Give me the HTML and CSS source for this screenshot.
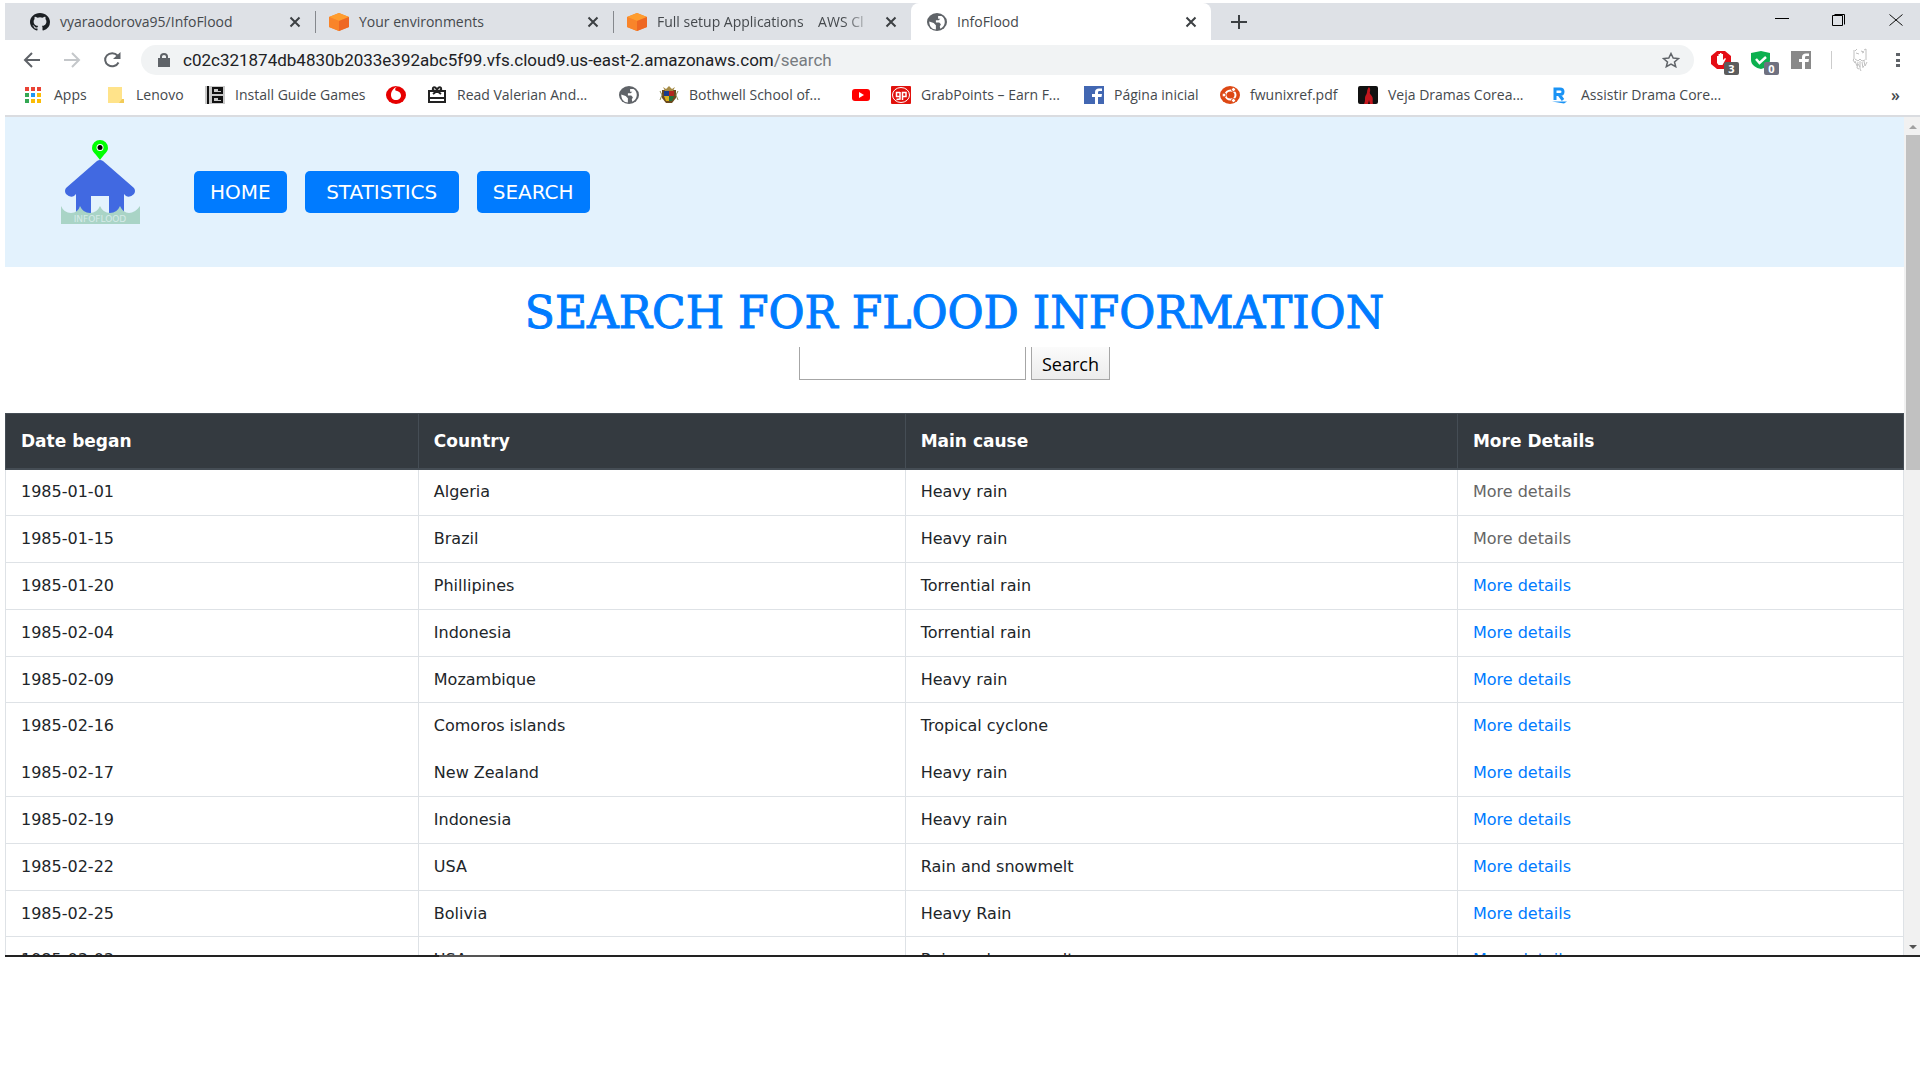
FILE: index.html
```html
<!DOCTYPE html>
<html lang="en">
<head>
<meta charset="utf-8">
<title>InfoFlood</title>
<link rel="stylesheet" href="styles.css">
</head>
<body>
<svg class="defs" aria-hidden="true">
  <symbol id="close" viewBox="0 0 12 12"><path d="M1.500 1.500l9 9M10.500 1.500l-9 9" stroke="#3c4043" stroke-width="2" fill="none"/></symbol>
  <symbol id="cube" viewBox="0 0 20 18"><path d="M10 0l10 4v10l-10 4-10-4V4z" fill="#f58536"/><path d="M10 0l10 4-10 4L0 4z" fill="#ff9d2e"/><path d="M0 4l10 4v10L0 14z" fill="#f9842a"/><path d="M10 8l10-4v10l-10 4z" fill="#ee6723"/></symbol>
  <symbol id="globe" viewBox="0 0 18 16"><ellipse cx="9" cy="8" rx="9" ry="8" fill="#5f6368"/><path d="M2 7.500L6 9l2 2v3.800C4.500 14.500 2 12 2 7.500zM10 2.500h3c2 1 3 3 3 5.500s-1.500 5-4 6l-.5-2 1-2-1.500-1.500H8v-2h2.500L12 5h-2z" fill="#fff"/></symbol>
</svg>
<div class="window">
  <header class="chrome">
    <div class="tabstrip">
      <div class="tab">
        <svg class="ico" viewBox="0 0 20 18" preserveAspectRatio="none"><path transform="scale(1.25 1.125)" fill="#1b1f23" d="M8 0C3.580 0 0 3.580 0 8c0 3.540 2.290 6.530 5.470 7.590.4.070.55-.17.55-.38 0-.19-.01-.82-.01-1.490-2.010.37-2.530-.49-2.690-.94-.09-.23-.48-.94-.82-1.130-.28-.15-.68-.52-.01-.53.63-.01 1.080.58 1.230.82.72 1.210 1.870.87 2.330.66.070-.52.28-.87.51-1.070-1.780-.2-3.640-.89-3.640-3.950 0-.87.31-1.590.82-2.150-.08-.2-.36-1.020.08-2.120 0 0 .67-.21 2.200.82a7.600 7.600 0 0 1 4 0c1.530-1.040 2.200-.82 2.200-.82.44 1.100.16 1.920.08 2.120.51.56.82 1.270.82 2.150 0 3.070-1.870 3.750-3.650 3.950.29.25.54.73.54 1.480 0 1.070-.01 1.930-.01 2.200 0 .21.15.46.55.38A8.010 8.010 0 0 0 16 8c0-4.420-3.580-8-8-8z"/></svg>
        <span class="tab-title">vyaraodorova95/InfoFlood</span>
        <button class="bare" aria-label="Close tab"><svg class="x"><use href="#close"/></svg></button>
      </div>
      <div class="tab divided">
        <svg class="ico"><use href="#cube"/></svg>
        <span class="tab-title">Your environments</span>
        <button class="bare" aria-label="Close tab"><svg class="x"><use href="#close"/></svg></button>
      </div>
      <div class="tab divided">
        <svg class="ico"><use href="#cube"/></svg>
        <span class="tab-title fade">Full setup Applications &nbsp; &nbsp;AWS Cl</span>
        <button class="bare" aria-label="Close tab"><svg class="x"><use href="#close"/></svg></button>
      </div>
      <div class="tab active">
        <svg class="ico"><use href="#globe"/></svg>
        <span class="tab-title">InfoFlood</span>
        <button class="bare" aria-label="Close tab"><svg class="x"><use href="#close"/></svg></button>
      </div>
      <button class="bare newtab" aria-label="New tab"><svg width="16" height="16" viewBox="0 0 16 16"><path d="M8 1v14M0 8h16" stroke="#3c4043" stroke-width="2"/></svg></button>
      <div class="controls">
        <button class="bare" aria-label="Minimize"><svg width="14" height="12" viewBox="0 0 14 12"><path d="M0 4.500h14" stroke="#000"/></svg></button>
        <button class="bare" aria-label="Restore"><svg width="14" height="12" viewBox="0 0 14 12"><path d="M.5 1.500h10v10H.5zM2.500.5h10v10" fill="none" stroke="#000"/></svg></button>
        <button class="bare" aria-label="Close"><svg width="14" height="12" viewBox="0 0 14 12"><path d="M.5.5l13 11M13.500.5l-13 11" stroke="#111"/></svg></button>
      </div>
    </div>

    <div class="toolbar">
      <button class="bare" aria-label="Back"><svg width="18" height="16" viewBox="0 0 18 16"><path d="M17 8H2M9 1L2 8l7 7" fill="none" stroke="#5f6368" stroke-width="2"/></svg></button>
      <button class="bare" aria-label="Forward"><svg width="18" height="16" viewBox="0 0 18 16"><path d="M1 8h15M9 1l7 7-7 7" fill="none" stroke="#c4c7ca" stroke-width="2"/></svg></button>
      <button class="bare" aria-label="Reload"><svg width="18" height="16" viewBox="0 0 18 16"><path d="M15.500 10.500A7 6.500 0 1 1 14.500 3.500" fill="none" stroke="#5f6368" stroke-width="2"/><path d="M17.500 0v7H10z" fill="#5f6368"/></svg></button>
      <div class="omnibox">
        <svg width="12" height="14" viewBox="0 0 12 14"><path d="M0 5h12v9H0z" fill="#5f6368"/><path d="M3 5V3.500a3 2.500 0 0 1 6 0V5" fill="none" stroke="#5f6368" stroke-width="2"/></svg>
        <span class="url">c02c321874db4830b2033e392abc5f99.vfs.cloud9.us-east-2.amazonaws.com<span class="path">/search</span></span>
        <svg width="18" height="16" viewBox="0 0 18 16"><path d="M9 1.500l2.200 4.500 5.300.5-4 3.400 1.200 4.800L9 12.100l-4.700 2.600 1.200-4.800-4-3.400L6.800 6z" fill="none" stroke="#5f6368" stroke-width="1.500"/></svg>
      </div>
      <div class="extensions">
        <span class="ext"><svg width="20" height="18" viewBox="0 0 20 18"><path d="M6 0h8l6 5v8l-6 5H6l-6-5V5z" fill="#e40d15"/><path d="M6 12V5h1.500v4V3H9v5-6h1.500v6V3H12v6l2-2 1 .7-3.500 6.300h-4z" fill="#fff"/></svg><span class="badge">3</span></span>
        <span class="ext"><svg width="20" height="18" viewBox="0 0 20 18"><path d="M0 2l10-2 9 2v7c0 5-5 8-9 9-5-1-10-4-10-9z" fill="#0cb04f"/><path d="M5 8l3.500 4L15 6" fill="none" stroke="#fff" stroke-width="2.500"/></svg><span class="badge slate">0</span></span>
        <svg width="20" height="18" viewBox="0 0 20 18"><path d="M0 0h20v18H0z" fill="#898989"/><path d="M11 18v-7H8V8h3V6c0-2 1.500-3.500 4-3.500h3V5h-2.500C14.500 5 14 5.500 14 6.500V8h4l-.5 3H14v7z" fill="#fff"/></svg>
        <span class="rule"></span>
        <svg width="16" height="24" viewBox="0 0 16 24"><path d="M2 2v9l-1 1 2 3M5 1l-2 2M14 1v11M12 2l2-1M4 5l3 1M9 3l3 1-2 1M3 11l3 2 2-2 2 2 3-1M3 13l2 5M6 14l-1 6 2 1M8 13v8l1 2M10 14l1 6M12 13l1 5 2-4M6 16l2 3M10 17l2 2" fill="none" stroke="#c0c0c0"/></svg>
        <svg width="4" height="16" viewBox="0 0 4 16"><path d="M0 1h4v3H0zM0 7h4v3H0zM0 12h4v3H0z" fill="#5f6368"/></svg>
      </div>
    </div>

    <nav class="bookmarks" aria-label="Bookmarks">
      <a href="#"><svg class="bi" viewBox="0 0 20 18"><path d="M1 1h4v4H1zM7 1h4v4H7zM13 1h4v4h-4z" fill="#ea4335"/><path d="M1 7h4v4H1zM1 13h4v4H1z" fill="#34a853"/><path d="M7 7h4v4H7z" fill="#2196f3"/><path d="M7 13h4v4H7zM13 7h4v4h-4zM13 13h4v4h-4z" fill="#fbbc05"/></svg>Apps</a>
      <a href="#"><svg class="bi" viewBox="0 0 20 18"><path d="M2 1h14v12h2v4H2z" fill="#ffe38a"/><path d="M16 13h2v4h-5z" fill="#f2cb58"/></svg>Lenovo</a>
      <a href="#"><svg class="bi" viewBox="0 0 20 18"><path d="M0 0h20v18H0z" fill="#c9c9c9"/><path d="M3 0v18M18 2H8v5h9V4h-4M18 11H8v5h9v-3h-4" fill="none" stroke="#111" stroke-width="2"/></svg>Install Guide Games</a>
      <a href="#" aria-label="Vodafone"><svg class="bi" viewBox="0 0 20 18"><ellipse cx="10" cy="9" rx="10" ry="9" fill="#e60000"/><path d="M13 0C9 1 9 3 9.500 4.500 13 5 15 7 15 9.500S13 14 10 14s-5-2-5-5C5 5 8 1 13 0z" fill="#fff"/></svg></a>
      <a href="#"><svg class="bi" viewBox="0 0 20 18"><path d="M2 5h16v11H2zM2 12h16M6 8l4-3 4 3M10 5C7 5 5 4 6 2s4 0 4 3c0-3 3-5 4-3s-1 3-4 3" fill="none" stroke="#222" stroke-width="2"/></svg>Read Valerian And...</a>
      <a href="#" aria-label="Website"><svg class="bi"><use href="#globe"/></svg></a>
      <a href="#"><svg class="bi" viewBox="0 0 20 18"><path d="M3 4h14v8l-4 5H7l-4-5z" fill="#6b4a1d"/><path d="M5 5h5v5H5z" fill="#173c8c"/><path d="M10 5h5v5h-5z" fill="#b3261e"/><path d="M5 10h5v5H7z" fill="#d9b01c"/><path d="M10 10h5l-2 5h-3z" fill="#23703a"/><path d="M4 1l3 2 3-3 3 3 3-2-2 4H6z" fill="#a58b45"/><path d="M1 5l2 4-2 5M19 5l-2 4 2 5" stroke="#8b8b55" fill="none"/></svg>Bothwell School of...</a>
      <a href="#" aria-label="YouTube"><svg class="bi" viewBox="0 0 20 18"><rect x="1" y="3" width="18" height="12" rx="3" fill="#f00"/><path d="M8 6l5 3-5 3z" fill="#fff"/></svg></a>
      <a href="#"><svg class="bi" viewBox="0 0 20 18"><rect width="20" height="18" rx="1" fill="#e1110c"/><ellipse cx="10" cy="9" rx="8.500" ry="7.500" fill="none" stroke="#fff"/><path d="M9 6.500H5.500v4H9V6v7l-3.500.5M11.500 14V6.500H15v4h-3.500" fill="none" stroke="#fff" stroke-width="1.500"/></svg>GrabPoints – Earn F...</a>
      <a href="#"><svg class="bi" viewBox="0 0 20 18"><path d="M0 0h20v18H0z" fill="#4267b2"/><path d="M11 18v-7H8V8h3V6c0-2 1.500-3.500 4-3.500h3V5h-2.500C14.500 5 14 5.500 14 6.500V8h4l-.5 3H14v7z" fill="#fff"/></svg>Página inicial</a>
      <a href="#"><svg class="bi" viewBox="0 0 20 18"><ellipse cx="10" cy="9" rx="10" ry="9" fill="#dd4814"/><ellipse cx="10.500" cy="9" rx="5" ry="4.500" fill="none" stroke="#fff" stroke-width="2"/><g fill="#fff" stroke="#dd4814"><circle cx="4" cy="9" r="2"/><circle cx="13.500" cy="3.500" r="2"/><circle cx="13.500" cy="14.500" r="2"/></g></svg>fwunixref.pdf</a>
      <a href="#"><svg class="bi" viewBox="0 0 20 18"><rect width="20" height="18" rx="2" fill="#111"/><path d="M11 1c3 4-1 5 2 8s1 6 2 9h-3l-1-4-1 4H6c2-4 0-6 2-9s0-4 3-8z" fill="#c3171e"/></svg>Veja Dramas Corea...</a>
      <a href="#"><svg class="bi" viewBox="0 0 20 18"><path d="M4 14V3h5c4 0 4 5.500 0 5.500H5M8 8.500l4 5.500" fill="none" stroke="#1a93f5" stroke-width="3"/><path d="M1 15.500h15l-3 2z" fill="#1a93f5"/></svg>Assistir Drama Core...</a>
      <button class="bare more" aria-label="More bookmarks">»</button>
    </nav>
  </header>

  <div class="viewport">
    <main class="page">
      <nav class="navbar">
        <a href="#" class="logo" aria-label="InfoFlood home">
          <svg width="80" height="104" viewBox="0 0 80 104">
            <path d="M40 0a8 8 0 0 1 8 8c0 4-4 6-8 12-4-6-8-8-8-12a8 8 0 0 1 8-8z" fill="#0f0"/><circle cx="40" cy="7.500" r="3.500" fill="#fff"/><circle cx="40" cy="7.500" r="2.500"/>
            <path d="M37 21q3-2 6 0l31 27q2 3 0 6-4 4-8 2l-2-2v19H49V56H31v17H16V54l-2 2q-4 2-8-2-2-3 0-6z" fill="#4169e1"/>
            <path d="M1 66q3 7 10 7t9-7q3 7 10 7t10-7q3 7 10 7t10-7q3 7 9 7t11-7v18H1z" fill="#a9d4c6"/>
            <text x="40" y="82" text-anchor="middle" class="logo-text">INFOFLOOD</text>
          </svg>
        </a>
        <a href="#" class="btn">HOME</a>
        <a href="#" class="btn btn-wide">STATISTICS</a>
        <a href="#" class="btn">SEARCH</a>
      </nav>
      <h1>SEARCH FOR FLOOD INFORMATION</h1>
      <form class="search" onsubmit="return false">
        <input type="text" aria-label="Search floods">
        <button type="submit">Search</button>
      </form>
      <table>
        <colgroup><col class="c-date"><col class="c-country"><col class="c-cause"><col></colgroup>
        <thead><tr><th>Date began</th><th>Country</th><th>Main cause</th><th>More Details</th></tr></thead>
        <tbody>
          <tr><td>1985-01-01</td><td>Algeria</td><td>Heavy rain</td><td><a href="#" class="seen">More details</a></td></tr>
          <tr><td>1985-01-15</td><td>Brazil</td><td>Heavy rain</td><td><a href="#" class="seen">More details</a></td></tr>
          <tr><td>1985-01-20</td><td>Phillipines</td><td>Torrential rain</td><td><a href="#">More details</a></td></tr>
          <tr><td>1985-02-04</td><td>Indonesia</td><td>Torrential rain</td><td><a href="#">More details</a></td></tr>
          <tr><td>1985-02-09</td><td>Mozambique</td><td>Heavy rain</td><td><a href="#">More details</a></td></tr>
          <tr class="joined"><td>1985-02-16</td><td>Comoros islands</td><td>Tropical cyclone</td><td><a href="#">More details</a></td></tr>
          <tr><td>1985-02-17</td><td>New Zealand</td><td>Heavy rain</td><td><a href="#">More details</a></td></tr>
          <tr><td>1985-02-19</td><td>Indonesia</td><td>Heavy rain</td><td><a href="#">More details</a></td></tr>
          <tr><td>1985-02-22</td><td>USA</td><td>Rain and snowmelt</td><td><a href="#">More details</a></td></tr>
          <tr><td>1985-02-25</td><td>Bolivia</td><td>Heavy Rain</td><td><a href="#">More details</a></td></tr>
          <tr><td>1985-03-03</td><td>USA</td><td>Rain and snowmelt</td><td><a href="#">More details</a></td></tr>
        </tbody>
      </table>
    </main>
    <div class="scrollbar" aria-hidden="true">
      <span class="arrow"><svg width="8" height="4" viewBox="0 0 8 4"><path d="M4 0l4 4H0z" fill="#a3a3a3"/></svg></span>
      <span class="thumb"></span>
      <span class="arrow end"><svg width="8" height="4" viewBox="0 0 8 4"><path d="M0 0h8L4 4z" fill="#505050"/></svg></span>
    </div>
  </div>
  <div class="taskbar-edge"><span></span></div>
</div>
</body>
</html>
```
FILE: styles.css
```css
* { box-sizing: border-box; }

body {
  margin: 0;
  background: #fff;
  color: #212529;
  font: 16px/22px "DejaVu Sans", Verdana, sans-serif;
}

a { color: #007bff; text-decoration: none; }
svg { display: block; flex: none; }
.defs { position: absolute; width: 0; height: 0; }

.bare {
  display: flex;
  align-items: center;
  justify-content: center;
  padding: 0;
  border: 0;
  background: none;
  color: inherit;
  font: inherit;
}

.window {
  display: flex;
  flex-direction: column;
  height: 100vh;
  padding: 3px 0 123px 5px;
}

/* Browser chrome */
.chrome {
  flex: none;
  border-bottom: 2px solid #dadce0;
  color: #45494d;
  font: 14px/20px "Open Sans", "Noto Sans", sans-serif;
}

.tabstrip {
  display: flex;
  height: 37px;
  background: #dee1e6;
}

.tab {
  display: flex;
  align-items: center;
  gap: 10px;
  flex: 0 1 299px;
  min-width: 0;
  padding: 0 14px 0 25px;
}
.tab.divided { padding-left: 15px; flex-basis: 298px; }
.tab:first-child { flex-basis: 310px; }
.divided::before {
  content: "";
  width: 1px;
  height: 22px;
  margin-left: -15px;
  margin-right: 3px;
  background: #85888d;
}
.tab.active {
  flex-basis: 300px;
  padding: 0 14px 0 16px;
  border-radius: 8px 8px 0 0;
  background: #fff;
}
.ico { width: 20px; height: 18px; }
.x { width: 12px; height: 12px; }
.tab-title {
  flex: 1;
  white-space: nowrap;
}
.fade {
  mask-image: linear-gradient(to right, #000 85%, transparent);
}
.newtab { width: 56px; }
.controls {
  display: flex;
  gap: 43px;
  align-items: flex-start;
  margin-left: auto;
  padding: 11px 17px 0 0;
}

.toolbar {
  display: flex;
  align-items: center;
  gap: 22px;
  height: 35px;
  padding: 5px 20px 0 18px;
}
.omnibox {
  display: flex;
  align-items: center;
  gap: 13px;
  flex: 1;
  height: 30px;
  margin-left: -2px;
  padding: 0 14px 0 17px;
  border-radius: 15px;
  background: #f1f3f4;
  color: #202124;
  font: 17px/24px Roboto, "Open Sans", sans-serif;
}
.url { flex: 1; white-space: nowrap; }
.path { color: #777b80; }
.extensions {
  display: flex;
  align-items: center;
  gap: 20px;
  margin-left: -5px;
}
.ext { position: relative; }
.badge {
  position: absolute;
  left: 13px;
  top: 11px;
  width: 15px;
  height: 13px;
  border-radius: 2px;
  background: #5c5c5c;
  color: #fff;
  font: bold 11px/14px "Open Sans", sans-serif;
  text-align: center;
}
.slate { background: #6f7180; }
.rule { width: 1px; height: 18px; background: #ccc; }
.extensions > :last-child { margin-left: 8px; }

.bookmarks {
  display: grid;
  grid-template-columns: 82px 99px 181px 41px 192px 40px 192px 40px 193px 136px 138px 193px 1fr auto;
  align-items: center;
  height: 40px;
  padding: 0 20px 0 19px;
}
.bookmarks a {
  display: flex;
  align-items: center;
  gap: 10px;
  color: inherit;
  white-space: nowrap;
}
.bi { width: 20px; height: 18px; }
.more { font-size: 16px; font-weight: 600; }

/* Page */
.viewport { display: flex; flex: 1; min-height: 0; overflow: hidden; }
.page { flex: 1; }

.navbar {
  display: flex;
  align-items: center;
  gap: 18px;
  height: 150px;
  padding: 0 55px 0;
  background: #e3f2fd;
}
.logo { margin-right: 36px; }
.logo-text { fill: #d5ebe8; font: 9px "DejaVu Sans", sans-serif; }
.btn {
  padding: 8px 16px;
  border-radius: 5px;
  background: #007bff;
  color: #fff;
  font-size: 20px;
  line-height: 26px;
  text-align: center;
}
.btn-wide { min-width: 154px; }

h1 {
  margin: 20px 0 8px;
  color: #007bff;
  font: 44px/52px "DejaVu Serif", Rockwell, serif;
  -webkit-text-stroke: 1px #007bff;
  text-align: center;
}

.search {
  display: flex;
  justify-content: center;
  gap: 5px;
  margin-bottom: 33px;
}
.search input,
.search button {
  height: 33px;
  border: 1px solid #a6a6a6;
  border-top: 0;
  border-radius: 0;
  color: #000;
  font: 18px/26px "Open Sans", "Noto Sans", sans-serif;
}
.search input { width: 227px; }
.search button {
  width: 79px;
  padding: 1px 0 0;
  background: linear-gradient(#fbfbfb, #ececec);
}

table {
  width: 100%;
  border-collapse: collapse;
  table-layout: fixed;
}
.c-date { width: 21.750%; }
.c-country { width: 25.650%; }
.c-cause { width: 29.100%; }
th, td {
  height: 47px;
  padding: 0 15px;
  border: 1px solid #dee2e6;
  text-align: left;
}
th {
  height: 55px;
  border-color: #454d55;
  border-bottom-width: 2px;
  background: #343a40;
  color: #fff;
  font-size: 17px;
}
tr:nth-child(5n) td { height: 46px; }
.joined td { border-bottom-color: transparent; }
.joined + tr td { border-top-color: transparent; }
.seen { color: #666; }

.scrollbar {
  display: flex;
  flex-direction: column;
  width: 16px;
  padding-left: 2px;
  background: #f1f1f1;
}
.arrow { display: flex; justify-content: center; padding: 8px 0 6px; }
.end { margin-top: auto; }
.thumb { height: 40%; background: #c1c1c1; }

.taskbar-edge { flex: none; height: 2px; padding-left: 434px; background: #222; }
.taskbar-edge span { display: block; width: 61px; height: 2px; background: #555; }
```
